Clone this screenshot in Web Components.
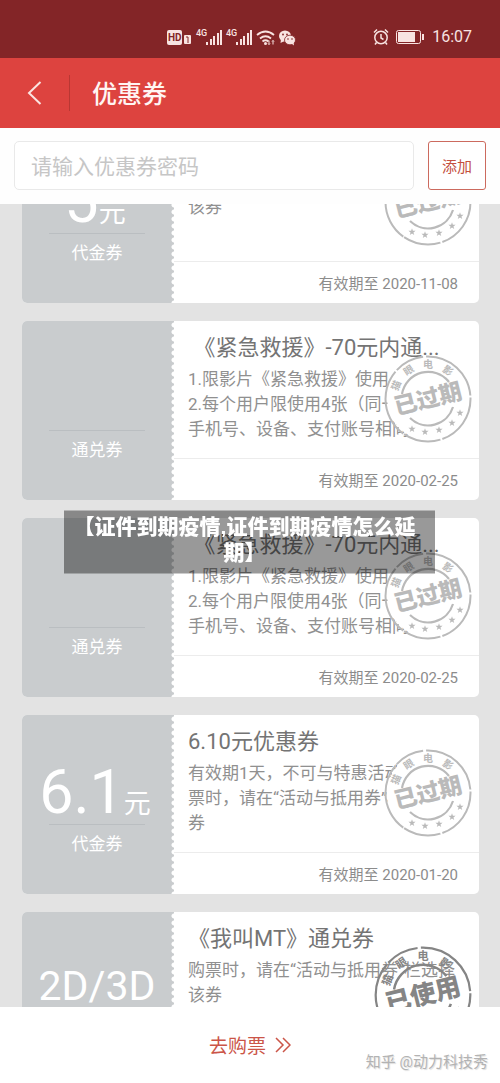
<!DOCTYPE html>
<html lang="zh-CN">
<head>
<meta charset="utf-8">
<meta name="viewport" content="width=device-width, initial-scale=1">
<title>优惠券</title>
<style>
  html, body { height: 100%; }
  body { margin: 0; background: #e3e3e3; font-family: Roboto, "Noto Sans CJK SC", sans-serif; }
</style>
</head>
<body>
<coupon-app></coupon-app>

<template id="t-app">
  <style>
    :host { display: flex; flex-direction: column; height: 100vh; }
    main { flex: 1; min-height: 0; overflow-y: auto; scrollbar-width: none; background: #e3e3e3; }
    .list { display: flex; flex-direction: column; gap: 18px; padding: 0 21px 18px 22px; }
  </style>
  <status-bar></status-bar>
  <nav-bar>优惠券</nav-bar>
  <redeem-form></redeem-form>
  <main>
    <div class="list">
      <coupon-card amount="5" unit="元" kind="代金券" expires="2020-11-08" state="expired">
        <span slot="title">5元优惠券</span>购票时，请在“活动与抵用券”<br>该券
      </coupon-card>
      <coupon-card kind="通兑券" expires="2020-02-25" state="expired">
        <span slot="title">&nbsp;《紧急救援》-70元内通...</span>1.限影片《紧急救援》使用<br>2.每个用户限使用4张（同一<br>手机号、设备、支付账号相同
      </coupon-card>
      <coupon-card kind="通兑券" expires="2020-02-25" state="expired">
        <span slot="title">&nbsp;《紧急救援》-70元内通...</span>1.限影片《紧急救援》使用<br>2.每个用户限使用4张（同一<br>手机号、设备、支付账号相同
      </coupon-card>
      <coupon-card amount="6.1" unit="元" kind="代金券" expires="2020-01-20" state="expired">
        <span slot="title">6.10元优惠券</span>有效期1天，不可与特惠活动<br>票时，请在“活动与抵用券”栏<br>券
      </coupon-card>
      <coupon-card amount="2D/3D" kind="通兑券" expires="2020-01-20" state="used">
        <span slot="title">《我叫MT》通兑券</span>购票时，请在“活动与抵用券”栏选择<br>该券
      </coupon-card>
    </div>
  </main>
  <buy-footer></buy-footer>
  <caption-overlay>【证件到期疫情,证件到期疫情怎么延期】</caption-overlay>
</template>

<template id="t-status">
  <style>
    :host { display: flex; align-items: center; justify-content: space-between; height: 58px; padding: 16px 28px 0 167px; box-sizing: border-box; background: #832527; color: #f8e3e1; font-size: 16px; }
    .group { display: flex; align-items: center; }
    svg { display: block; }
    .right { gap: 7px; }
    time { line-height: 20px; padding-left: 1px; }
  </style>
  <div class="group">
    <svg width="130" height="20" viewBox="0 0 130 20" fill="#f8e3e1">
      <rect x="0" y="3" width="15" height="15" rx="2"/>
      <text x="1" y="14" font-size="10" font-weight="700" fill="#832527">HD</text>
      <rect x="17" y="8" width="7" height="9" rx="1"/>
      <path d="M19 10h2v6" stroke="#832527" fill="none"/>
      <text x="29" y="9" font-size="9" font-weight="500">4G</text>
      <path d="M39 15h2v3h-2zM43 12h2v6h-2zM46 9h2v9h-2zM50 6h2v12h-2zM53 3h2v15h-2z"/>
      <text x="59" y="9" font-size="9" font-weight="500">4G</text>
      <path d="M69 15h2v3h-2zM73 12h2v6h-2zM76 9h2v9h-2zM80 6h2v12h-2zM83 3h2v15h-2z"/>
      <path d="M90 8q8.500-7 17 0M93 11.500q5.500-4.500 11 0M95.500 14.500q3-2.500 6 0" fill="none" stroke="#f8e3e1" stroke-width="1.800"/>
      <circle cx="98.500" cy="16.500" r="1.500"/>
      <path d="M102 13.500v4m-1-1 1 1 1-1M106 17.500v-4m-1 1 1-1 1 1" fill="none" stroke="#f8e3e1"/>
      <ellipse cx="118" cy="9" rx="6" ry="5.500"/>
      <path d="M114 12l-.5 4 4-2z"/>
      <ellipse cx="123" cy="13" rx="5.500" ry="4.800" stroke="#832527" stroke-width=".8"/>
      <path d="M124 16l3 2.500-.5-3.500z"/>
      <g fill="#832527"><circle cx="116" cy="7.500" r=".9"/><circle cx="120" cy="7.500" r=".9"/><circle cx="121" cy="12" r=".8"/><circle cx="125" cy="12" r=".8"/></g>
    </svg>
  </div>
  <div class="group right">
    <svg width="16" height="18" viewBox="0 0 16 18" fill="none" stroke="#f8e3e1" stroke-width="1.500">
      <circle cx="8" cy="9.500" r="6.200"/><path d="M8 6v4l2.500 1.500M1 4.500l3-3M15 4.500l-3-3M3.500 14.500L2 16.500M12.500 14.500l1.500 2"/>
    </svg>
    <svg width="28" height="14" viewBox="0 0 28 14">
      <rect x=".5" y=".5" width="24" height="13" rx="2" fill="none" stroke="#f8e3e1"/>
      <path d="M2 2h17v10H2zM26 4h2v6h-2z" fill="#f8e3e1"/>
    </svg>
    <time>16:07</time>
  </div>
</template>

<template id="t-nav">
  <style>
    :host { display: flex; align-items: center; height: 70px; background: #dd433f; color: #fff5f3; }
    a { display: flex; align-items: center; box-sizing: border-box; width: 70px; height: 36px; padding-left: 27px; border-right: 1px solid #b93733; }
    h1 { margin: 0 0 0 22px; padding-top: 4px; font-size: 25px; line-height: 36px; font-weight: 500; }
  </style>
  <a href="#back" aria-label="返回"><svg width="15" height="26" viewBox="0 0 15 26"><path d="M13.500 2L2 13l11.500 11" fill="none" stroke="#fbe4e1" stroke-width="2"/></svg></a>
  <h1><slot></slot></h1>
</template>

<template id="t-form">
  <style>
    :host { display: block; background: #fefefe; }
    form { display: flex; gap: 14px; padding: 13px 14px 14px; }
    input, button { box-sizing: border-box; height: 49px; border-radius: 5px; font-family: inherit; }
    input { flex: 1; min-width: 0; padding: 2px 16px 0; border: 1px solid #e9e9e9; background: #fff; font-size: 21px; color: #666; outline: none; }
    input::placeholder { color: #c6c6c6; opacity: 1; }
    button { width: 58px; padding: 0; border: 1px solid #cc6a5e; border-radius: 3px; background: #fff; color: #c4503f; font-size: 15px; }
  </style>
  <form>
    <input type="text" aria-label="优惠券密码" placeholder="请输入优惠券密码">
    <button type="button">添加</button>
  </form>
</template>

<template id="t-card">
  <style>
    :host { display: flex; position: relative; height: 179px; border-radius: 5px; overflow: hidden; background: #fff; }
    .stub { display: flex; flex-direction: column; align-items: center; box-sizing: border-box; width: 152px; padding: 40px 2px 0 0; color: #fff;
      background: radial-gradient(circle at 4px 4px, #fff 2px, transparent 3px) right top / 4px 7px repeat-y, #c9ccce; }
    .amount { display: flex; align-items: baseline; justify-content: center; height: 69px; line-height: 74px; font-size: 61px; }
    .amount.wide { font-size: 41px; line-height: 68px; }
    .unit:not(:empty) { margin-right: 4px; font-size: 27px; }
    .kind { width: 96px; border-top: 1px solid #babec1; padding-top: 7px; text-align: center; font-size: 17px; line-height: 25px; }
    .info { display: flex; flex-direction: column; flex: 1; min-width: 0; }
    .body { height: 137px; box-sizing: border-box; padding: 10px 0 0 14px; white-space: nowrap; overflow: hidden; }
    h2 { margin: 0 0 3px; font-size: 22px; line-height: 33px; font-weight: 400; color: #747474; }
    p { margin: 0; font-size: 17px; line-height: 25px; color: #909090; }
    .date { border-top: 1px solid #ececec; padding: 3px 21px 0 0; text-align: right; font-size: 15px; line-height: 38px; color: #8c8c8c; }
    coupon-stamp { position: absolute; right: 7px; top: 34px; }
  </style>
  <div class="stub"><div class="amount"><span class="value"></span><span class="unit"></span></div><div class="kind"></div></div>
  <div class="info">
    <div class="body"><h2><slot name="title"></slot></h2><p><slot></slot></p></div>
    <div class="date">有效期至 <time></time></div>
  </div>
  <coupon-stamp></coupon-stamp>
</template>

<template id="t-stamp">
  <style>
    :host { display: block; width: 88px; height: 88px; color: #bababa; }
    :host([state="used"]) { width: 98px; height: 98px; color: #858585; }
    :host([state="used"]) .back { display: none; }
    svg { display: block; width: 100%; height: 100%; }
    text { text-anchor: middle; fill: currentColor; font-weight: 700; }
    .word { font-weight: 900; }
  </style>
  <svg viewBox="-44 -44 88 88">
    <circle class="back" r="41" fill="#fff"/>
    <g fill="none" stroke="currentColor">
      <circle r="42.500" stroke-width="2" stroke-dasharray="52 2 38 1 70 2 30 3 65 2"/>
      <path d="M-26 -5A26.500 26.500 0 0 1 21 -17M-18 19A26 26 0 0 0 25 8" stroke-width="2.200"/>
    </g>
    <g font-size="10">
      <text transform="rotate(-67) translate(0 -31)">猫</text>
      <text transform="rotate(-34) translate(0 -31)">眼</text>
      <text transform="translate(0 -31)">电</text>
      <text transform="rotate(35) translate(0 -31)">影</text>
    </g>
    <text class="word" transform="rotate(-14)" y="8" font-size="23"></text>
    <g class="stars" fill="currentColor"></g>
  </svg>
</template>

<template id="t-footer">
  <style>
    :host { display: flex; position: relative; align-items: center; justify-content: center; height: 76px; background: #fff; }
    a { display: flex; align-items: center; gap: 9px; color: #cb5548; font-size: 19px; text-decoration: none; }
    span { padding-top: 4px; line-height: 28px; }
    small { position: absolute; right: 12px; bottom: 10px; font-size: 15px; line-height: 22px; color: #b3b3b3; text-shadow: 1px 1px 1px #ddd; }
  </style>
  <a href="#buy"><span>去购票</span><svg width="16" height="18" viewBox="0 0 16 18"><path d="M1 2l7 7-7 7M8 2l7 7-7 7" fill="none" stroke="currentColor" stroke-width="1.500"/></svg></a>
  <small>知乎 @动力科技秀</small>
</template>

<template id="t-caption">
  <style>
    :host { display: block; position: fixed; top: 50%; left: 64px; right: 65px; transform: translateY(-50%); box-sizing: border-box; padding: 3px 18px 8px 8px; background: rgba(0, 0, 0, .4); color: #fff; text-align: center; font: 900 21px/26px "Liberation Sans", "Noto Sans CJK SC", sans-serif; }
  </style>
  <slot></slot>
</template>

<script>
  class Base extends HTMLElement {
    constructor() {
      super();
      const source = document.getElementById(this.constructor.template);
      this.attachShadow({ mode: 'open' }).append(source.content.cloneNode(true));
    }
    $(selector) { return this.shadowRoot.querySelector(selector); }
  }

  class CouponStamp extends Base {
    static template = 't-stamp';
    static observedAttributes = ['state'];
    attributeChangedCallback(name, previous, state) {
      this.$('.word').textContent = state === 'used' ? '已使用' : '已过期';
    }
    connectedCallback() {
      const centers = [[-16, 30], [-3, 33], [11, 31], [24, 24], [32, 14]];
      const outline = ([cx, cy]) => Array.from({ length: 10 }, (_, i) => {
        const r = i % 2 ? 1.5 : 3.8, a = (i * 36 - 90) * Math.PI / 180;
        return `${(cx + r * Math.cos(a)).toFixed(2)},${(cy + r * Math.sin(a)).toFixed(2)}`;
      }).join(' ');
      this.$('.stars').innerHTML = centers.map(c => `<polygon points="${outline(c)}"/>`).join('');
    }
  }

  class CouponCard extends Base {
    static template = 't-card';
    connectedCallback() {
      const get = name => this.getAttribute(name) || '';
      this.$('.value').textContent = get('amount');
      this.$('.unit').textContent = get('unit');
      this.$('.amount').classList.toggle('wide', get('amount').length > 3);
      this.$('.kind').textContent = get('kind');
      this.$('time').textContent = get('expires');
      this.$('coupon-stamp').setAttribute('state', get('state'));
    }
  }

  class CouponApp extends Base {
    static template = 't-app';
    connectedCallback() { this.$('main').scrollTop = 80; }
  }

  customElements.define('status-bar', class extends Base { static template = 't-status'; });
  customElements.define('nav-bar', class extends Base { static template = 't-nav'; });
  customElements.define('redeem-form', class extends Base { static template = 't-form'; });
  customElements.define('buy-footer', class extends Base { static template = 't-footer'; });
  customElements.define('caption-overlay', class extends Base { static template = 't-caption'; });
  customElements.define('coupon-stamp', CouponStamp);
  customElements.define('coupon-card', CouponCard);
  customElements.define('coupon-app', CouponApp);
</script>
</body>
</html>
